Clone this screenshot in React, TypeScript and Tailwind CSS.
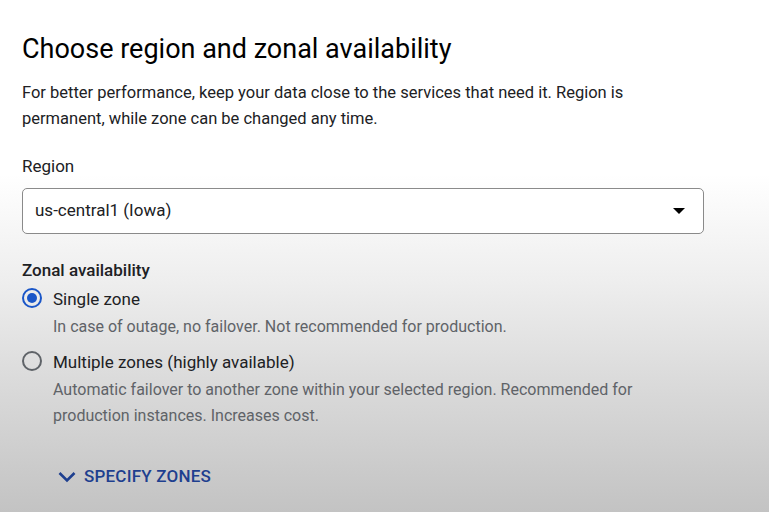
function Radio({ checked }: { checked?: boolean }) {
  return (
    <span
      className={`mt-[1px] flex h-5 w-5 shrink-0 items-center justify-center rounded-full border-2 ${
        checked ? "border-[#1a56c8]" : "border-[#5f6368]"
      }`}
    >
      {checked && <span className="h-[10px] w-[10px] rounded-full bg-[#1a56c8]" />}
    </span>
  )
}

export default function App() {
  return (
    <div className="h-[512px] w-[769px] overflow-hidden bg-[linear-gradient(to_bottom,#ffffff_0%,#ffffff_34%,#eeeeee_55%,#dadada_75%,#c3c3c3_100%)] font-['Roboto',sans-serif] text-[#202124]">
      <div className="px-[22px] pt-[32px]">
        <h1 className="text-[27px] leading-[34px] text-black">Choose region and zonal availability</h1>
        <p className="mt-[14px] w-[640px] text-[16.5px] leading-[26px] text-[#202124]">
          For better performance, keep your data close to the services that need it. Region is permanent,
          while zone can be changed any time.
        </p>

        <div className="mt-[22px] text-[17px] leading-[24px]">Region</div>
        <div className="mt-[10px] flex h-[46px] w-[682px] items-center justify-between rounded-[5px] border border-[#8a8a8a] bg-white pl-[12px] pr-[18px]">
          <span className="text-[17px]">us-central1 (Iowa)</span>
          <span className="h-0 w-0 border-x-[6px] border-t-[6px] border-x-transparent border-t-black" />
        </div>

        <div className="mt-[24px] text-[17px] font-medium leading-[24px]">Zonal availability</div>

        <div className="mt-[5px] flex flex-col gap-[10px]">
          <div className="flex gap-[11px]">
            <Radio checked />
            <div>
              <div className="text-[17px] leading-[24px]">Single zone</div>
              <div className="mt-[3px] text-[16px] leading-[26px] text-[#5f6368]">
                In case of outage, no failover. Not recommended for production.
              </div>
            </div>
          </div>
          <div className="flex gap-[11px]">
            <Radio />
            <div>
              <div className="text-[17px] leading-[24px]">Multiple zones (highly available)</div>
              <div className="mt-[3px] w-[600px] text-[16px] leading-[26px] text-[#5f6368]">
                Automatic failover to another zone within your selected region. Recommended for production
                instances. Increases cost.
              </div>
            </div>
          </div>
        </div>

        <button className="ml-[36px] mt-[35px] flex items-center gap-[8px] text-[17px] font-medium uppercase tracking-[0.2px] text-[#1e3f8f]">
          <svg width="18" height="12" viewBox="0 0 18 12" fill="none">
            <polyline points="1.5,2 9,9.5 16.5,2" stroke="currentColor" strokeWidth="2.6" />
          </svg>
          Specify zones
        </button>
      </div>
    </div>
  )
}
